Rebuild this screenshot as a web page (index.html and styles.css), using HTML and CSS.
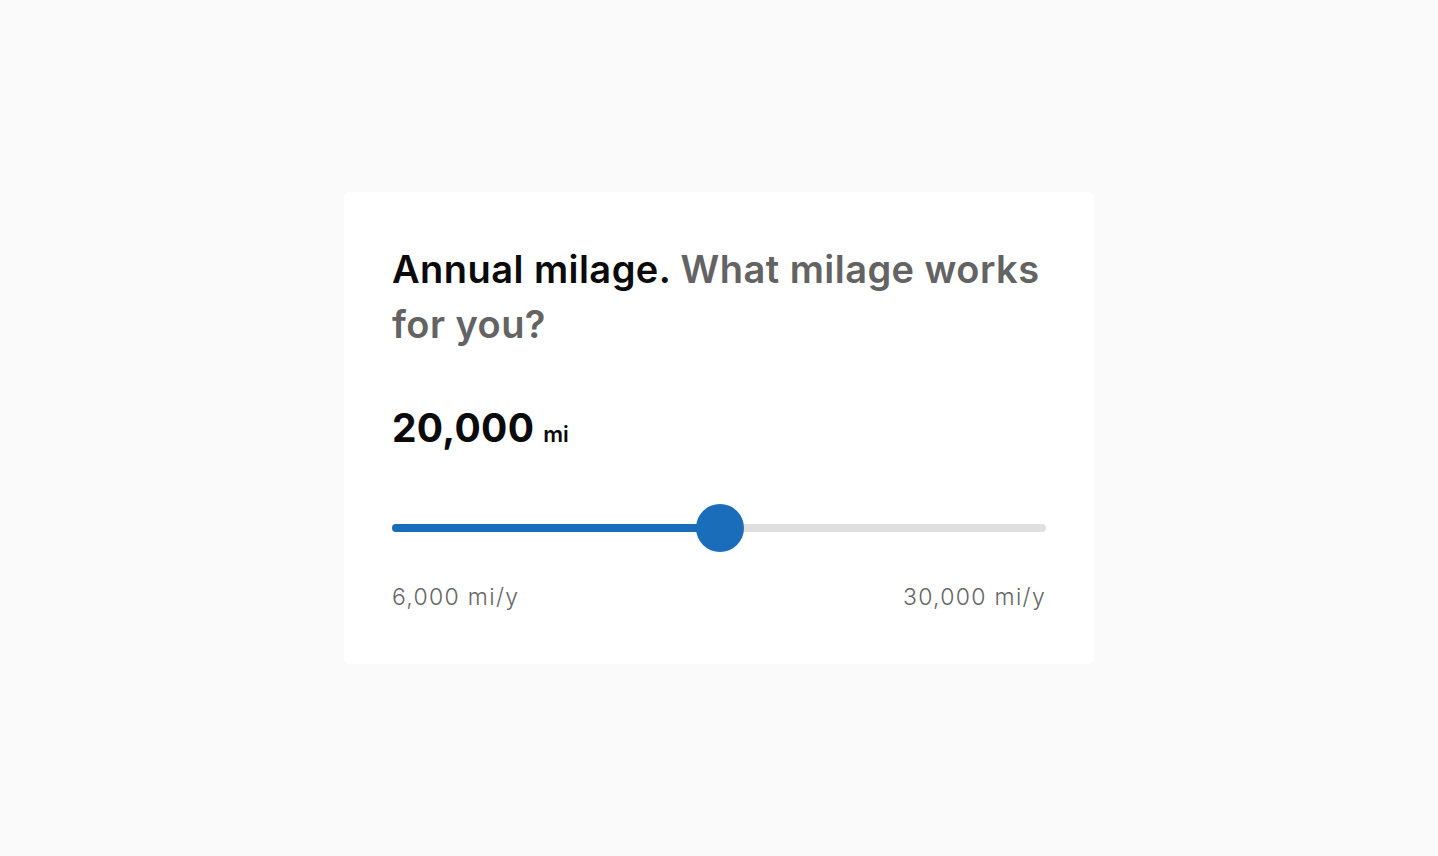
FILE: index.html
```html
<!DOCTYPE html>
<html lang="en">
<head>
    <meta charset="UTF-8">
    <meta name="viewport" content="width=device-width, initial-scale=1.0">
    <title>Annual milage</title>
    <link rel="stylesheet" href="styles.css">
</head>
<body>

<div class="card">
    <h2 class="question">
        <span class="question-title">Annual milage.</span>
        What milage works for you?
    </h2>

    <div class="amount">
        <span class="amount-value">20,000</span>
        <span class="amount-unit">mi</span>
    </div>

    <div class="slider">
        <div class="slider-track">
            <div class="slider-fill" style="width: 50%"></div>
            <div class="slider-thumb" style="left: 50%"></div>
        </div>
    </div>

    <div class="range-labels">
        <span>6,000 mi/y</span>
        <span>30,000 mi/y</span>
    </div>
</div>

</body>
</html>
```

FILE: styles.css
```css
body, html {
    margin: 0;
    padding: 0;
    height: 100%;
    width: 100%;
    background-color: #fafafa;
    font-family: Inter, "Noto Sans", sans-serif;
    display: flex;
    justify-content: center;
    align-items: center;
}
.card {
    width: 750px;
    box-sizing: border-box;
    padding: 50px 48px 53px;
    background: #fff;
    border-radius: 6px;
}
.question {
    margin: 0;
    font-size: 38px;
    line-height: 55px;
    font-weight: 600;
    letter-spacing: 0.45px;
    color: #636363;
}
.question-title {
    color: #0a0a0a;
}
.amount {
    margin-top: 52px;
    display: flex;
    align-items: baseline;
    gap: 9px;
    color: #0a0a0a;
}
.amount-value {
    font-size: 39px;
    font-weight: 700;
    letter-spacing: 0.3px;
}
.amount-unit {
    font-size: 22px;
    font-weight: 600;
}
.slider {
    margin-top: 53px;
    padding: 20px 0;
}
.slider-track {
    position: relative;
    height: 8px;
    border-radius: 4px;
    background: #e0e0e0;
}
.slider-fill {
    height: 100%;
    border-radius: 4px;
    background: #1a6db8;
}
.slider-thumb {
    position: absolute;
    top: 50%;
    width: 48px;
    height: 48px;
    margin: -24px 0 0 -23px;
    border-radius: 50%;
    background: #1a6db8;
}
.range-labels {
    margin-top: 31px;
    display: flex;
    justify-content: space-between;
    font-size: 23px;
    font-weight: 300;
    letter-spacing: 1.3px;
    color: #666;
}
```
